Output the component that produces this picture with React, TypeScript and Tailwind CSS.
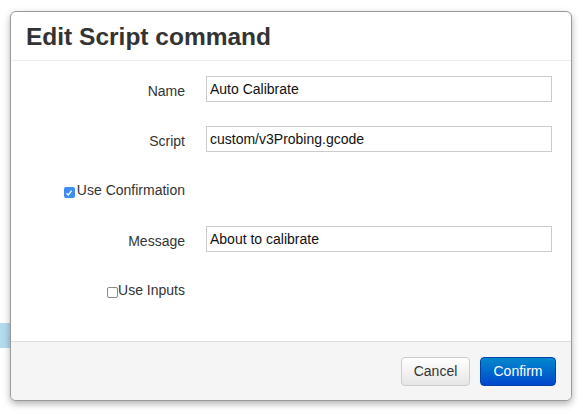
import { useState } from 'react';

const FONT = "font-['Liberation_Sans','Helvetica_Neue',Arial,sans-serif]";

function TextRow({ label, value }: { label: string; value: string }) {
  return (
    <div className="flex items-center h-[26px]">
      <label className="w-[159px] text-right text-[14px] text-[#333] pt-[5px]">{label}</label>
      <input
        className="ml-[21px] w-[346px] h-[26px] border border-[#cccccc] px-[3px] text-[14px] text-[#111] outline-none"
        defaultValue={value}
      />
    </div>
  );
}

function CheckRow({ label, checked }: { label: string; checked: boolean }) {
  const [on, setOn] = useState(checked);
  return (
    <div className="flex items-center h-[26px]">
      <label className="w-[159px] flex justify-end items-center text-[14px] text-[#333] pt-[3px]">
        <span
          onClick={() => setOn(!on)}
          className={
            on
              ? 'w-[11px] h-[11px] mt-[4px] mr-[2px] rounded-[2px] bg-[#3b8ef0] flex items-center justify-center'
              : 'w-[11px] h-[11px] mt-[4px] rounded-[2px] border border-[#8a8a8a] bg-white'
          }
        >
          {on && (
            <svg width="8" height="8" viewBox="0 0 8 8">
              <path d="M1.5 4.2 L3.3 6 L6.6 1.6" stroke="#fff" strokeWidth="1.3" fill="none" />
            </svg>
          )}
        </span>
        <span>{label}</span>
      </label>
    </div>
  );
}

export default function App() {
  return (
    <div className={`relative w-[583px] h-[414px] bg-white overflow-hidden ${FONT}`}>
      <div className="absolute left-0 top-[323px] w-[12px] h-[25px] bg-[#b3dbee]" />
      <div className="absolute left-[10px] top-[11px] w-[562px] h-[390px] flex flex-col bg-white border border-[#9a9a9a] rounded-[6px] shadow-[0_3px_7px_rgba(0,0,0,0.3)] overflow-hidden">
        <div className="h-[49px] border-b border-[#eeeeee] px-[15px] flex items-center">
          <h3 className="text-[24.5px] font-bold text-[#333] leading-none pt-[2px]">Edit Script command</h3>
        </div>
        <div className="flex-1 px-[15px] pt-[15px] flex flex-col gap-[24px]">
          <TextRow label="Name" value="Auto Calibrate" />
          <TextRow label="Script" value="custom/v3Probing.gcode" />
          <CheckRow label="Use Confirmation" checked={true} />
          <TextRow label="Message" value="About to calibrate" />
          <CheckRow label="Use Inputs" checked={false} />
        </div>
        <div className="h-[59px] bg-[#f5f5f5] border-t border-[#dddddd] flex items-center justify-end gap-[10px] pr-[15px]">
          <button className="w-[69px] h-[29px] rounded-[4px] border border-[#cccccc] bg-linear-to-b from-[#ffffff] to-[#e6e6e6] text-[14px] text-[#333]">
            Cancel
          </button>
          <button className="w-[76px] h-[29px] rounded-[4px] border border-[#0044aa] bg-linear-to-b from-[#0088cc] to-[#0044cc] text-[14px] text-white">
            Confirm
          </button>
        </div>
      </div>
    </div>
  );
}
